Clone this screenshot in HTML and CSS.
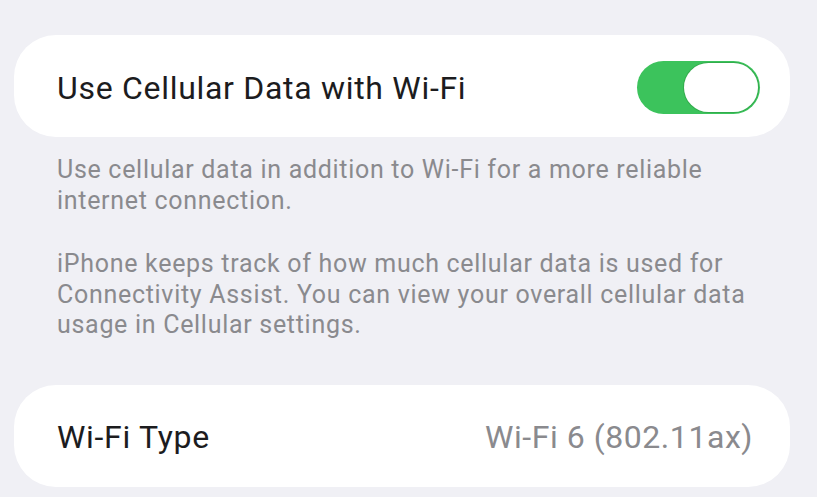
FILE: index.html
```html
<!DOCTYPE html>
<html lang="en">
<head>
<meta charset="utf-8">
<title>Wi-Fi</title>
<link rel="stylesheet" href="styles.css">
</head>
<body>
  <main class="settings">
    <section class="card row">
      <span class="label">Use Cellular Data with Wi-Fi</span>
      <span class="switch is-on" role="switch" aria-checked="true"><span class="knob"></span></span>
    </section>
    <div class="footnote">
      <p>Use cellular data in addition to Wi-Fi for a more reliable internet connection.</p>
      <p>iPhone keeps track of how much cellular data is used for Connectivity Assist. You can view your overall cellular data usage in Cellular settings.</p>
    </div>
    <section class="card row row-detail">
      <span class="label">Wi-Fi Type</span>
      <span class="value">Wi-Fi 6 (802.11ax)</span>
    </section>
  </main>
</body>
</html>
```
FILE: styles.css
```css
html, body {
  margin: 0;
  height: 100%;
}

body {
  background: #f0f0f5;
  font-family: Roboto, "Liberation Sans", Arial, sans-serif;
  color: #1c1c1e;
  overflow: hidden;
}

.settings {
  padding: 35px 27px 0 14px;
}

.card {
  background: #ffffff;
  border-radius: 42px;
  height: 102px;
  box-sizing: border-box;
}

.row {
  display: flex;
  align-items: center;
  justify-content: space-between;
  padding: 0 30px 0 43px;
}

.row-detail {
  padding-right: 37px;
}

.label {
  font-size: 32px;
  letter-spacing: 0.7px;
  padding-top: 3px;
}

.value {
  font-size: 32px;
  letter-spacing: 0.55px;
  color: #8a8a8e;
  padding-top: 3px;
}

.switch {
  display: flex;
  justify-content: flex-end;
  align-items: center;
  width: 123px;
  height: 53px;
  padding: 2px;
  box-sizing: border-box;
  border-radius: 27px;
  background: #3cc35c;
  margin-top: 2px;
}

.knob {
  width: 74px;
  height: 49px;
  border-radius: 25px;
  background: #ffffff;
  box-shadow: 0 0 0 1px rgba(40, 150, 60, 0.5);
}

.footnote {
  padding: 18px 30px 0 43px;
  margin-bottom: 44px;
  color: #8a8a8e;
  font-size: 25px;
  letter-spacing: 0.7px;
  line-height: 30.5px;
}

.footnote p {
  margin: 0;
}

.footnote p + p {
  margin-top: 33px;
}
```
